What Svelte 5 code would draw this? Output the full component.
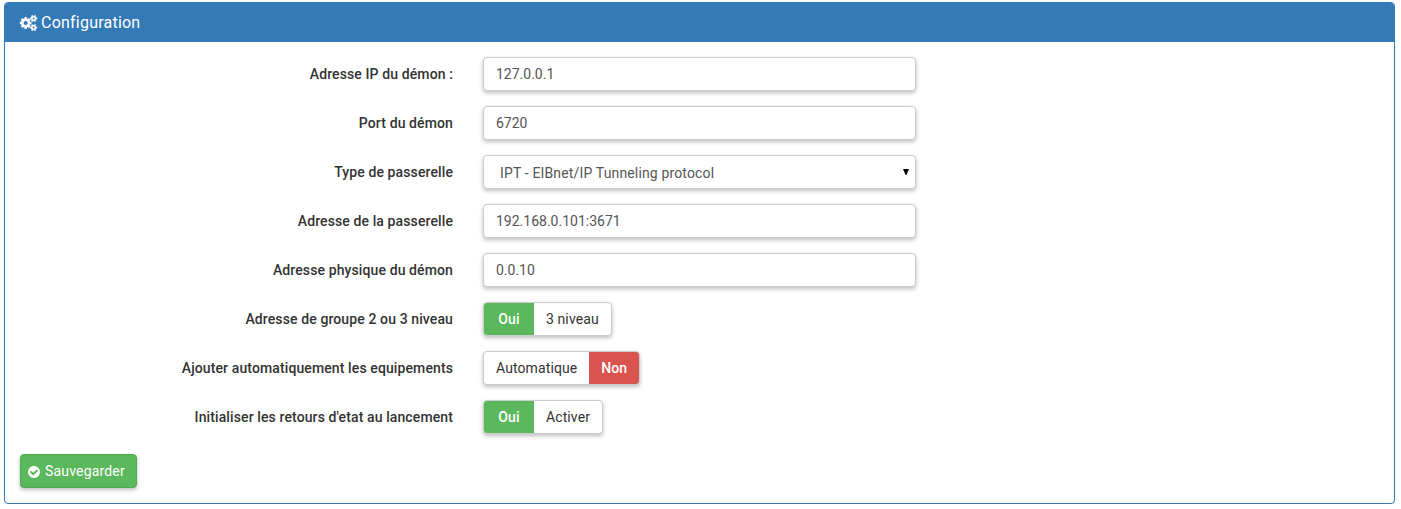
<script>
  const cogs = "M896 896q0-106-75-181t-181-75-181 75-75 181 75 181 181 75 181-75 75-181zm768 512q0-52-38-90t-90-38-90 38-38 90q0 53 37.5 90.5t90.5 37.5 90.5-37.5 37.5-90.5zm0-1024q0-52-38-90t-90-38-90 38-38 90q0 53 37.5 90.5t90.5 37.5 90.5-37.5 37.5-90.5zm-384 421v185q0 10-7 19.5t-16 10.5l-155 24q-11 35-32 76 34 48 90 115 7 11 7 20 0 12-7 19-23 30-82.5 89.5t-78.5 59.5q-11 0-21-7l-115-90q-37 19-77 31-11 108-23 155-7 24-30 24h-186q-11 0-20-7.5t-10-17.5l-23-153q-34-10-75-31l-118 89q-7 7-20 7-11 0-21-8-144-133-144-160 0-9 7-19 10-14 41-53t47-61q-23-44-35-82l-152-24q-10-1-17-9.5t-7-19.5v-185q0-10 7-19.5t16-10.5l155-24q11-35 32-76-34-48-90-115-7-11-7-20 0-12 7-20 22-30 82-89t79-59q11 0 21 7l115 90q34-18 77-32 11-108 23-154 7-24 30-24h186q11 0 20 7.5t10 17.5l23 153q34 10 75 31l118-89q8-7 20-7 11 0 21 8 144 133 144 160 0 8-7 19-12 16-42 54t-45 60q23 48 34 82l152 23q10 2 17 10.5t7 19.5zm640 533v140q0 16-149 31-12 27-30 52 51 113 51 138 0 4-4 7-122 71-124 71-8 0-46-47t-52-68q-20 2-30 2t-30-2q-14 21-52 68t-46 47q-2 0-124-71-4-3-4-7 0-25 51-138-18-25-30-52-149-15-149-31v-140q0-16 149-31 13-29 30-52-51-113-51-138 0-4 4-7 4-2 35-20t59-34 30-16q8 0 46 46.5t52 67.5q20-2 30-2t30 2q51-71 92-112l6-2q4 0 124 70 4 3 4 7 0 25-51 138 17 23 30 52 149 15 149 31zm0-1024v140q0 16-149 31-12 27-30 52 51 113 51 138 0 4-4 7-122 71-124 71-8 0-46-47t-52-68q-20 2-30 2t-30-2q-14 21-52 68t-46 47q-2 0-124-71-4-3-4-7 0-25 51-138-18-25-30-52-149-15-149-31v-140q0-16 149-31 13-29 30-52-51-113-51-138 0-4 4-7 4-2 35-20t59-34 30-16q8 0 46 46.5t52 67.5q20-2 30-2t30 2q51-71 92-112l6-2q4 0 124 70 4 3 4 7 0 25-51 138 17 23 30 52 149 15 149 31z";
  const check = "M1412 734q0-28-18-46l-91-90q-19-19-45-19t-45 19l-408 407-226-226q-19-19-45-19t-45 19l-91 90q-18 18-18 46 0 27 18 45l362 362q19 19 45 19 27 0 46-19l543-543q18-18 18-45zm252 162q0 209-103 385.5t-279.5 279.5-385.5 103-385.5-103-279.5-279.5-103-385.5 103-385.5 279.5-279.5 385.5-103 385.5 103 279.5 279.5 103 385.5z";

  let rows = $state([
    { id: 'ip', label: 'Adresse IP du démon :', type: 'text', value: '127.0.0.1' },
    { id: 'port', label: 'Port du démon', type: 'text', value: '6720' },
    { id: 'kind', label: 'Type de passerelle', type: 'select', value: 'IPT - EIBnet/IP Tunneling protocol' },
    { id: 'gateway', label: 'Adresse de la passerelle', type: 'text', value: '192.168.0.101:3671' },
    { id: 'physical', label: 'Adresse physique du démon', type: 'text', value: '0.0.10' },
    { id: 'group', label: 'Adresse de groupe 2 ou 3 niveau', type: 'switch', value: true, text: '3 niveau' },
    { id: 'auto', label: 'Ajouter automatiquement les equipements', type: 'switch', value: false, text: 'Automatique' },
    { id: 'init', label: "Initialiser les retours d'etat au lancement", type: 'switch', value: true, text: 'Activer' }
  ]);
</script>

<section class="panel">
  <h3 class="heading">
    <svg class="cogs" viewBox="0 0 1920 1792" aria-hidden="true"><path d={cogs} /></svg>
    <span>Configuration</span>
  </h3>
  <form class="body">
    {#each rows as row (row.id)}
      <div class="row">
        <label for={row.id}>{row.label}</label>
        {#if row.type === 'text'}
          <input id={row.id} class="control" type="text" bind:value={row.value} />
        {:else if row.type === 'select'}
          <div class="select">
            <select id={row.id} class="control" bind:value={row.value}>
              <option>{row.value}</option>
            </select>
            <svg class="arrow" viewBox="0 0 6 6" aria-hidden="true"><path d="M0 0h6L3.4 6h-.8z" /></svg>
          </div>
        {:else}
          <button id={row.id} type="button" class="switch" onclick={() => (row.value = !row.value)}>
            {#if row.value}<span class="state on">Oui</span>{/if}
            <span class="text">{row.text}</span>
            {#if !row.value}<span class="state off">Non</span>{/if}
          </button>
        {/if}
      </div>
    {/each}
    <button type="button" class="save">
      <svg class="check" viewBox="128 128 1536 1536" aria-hidden="true"><path d={check} /></svg>
      <span>Sauvegarder</span>
    </button>
  </form>
</section>

<style>
  :global(body) {
    background: #fff;
  }
  .panel {
    box-sizing: border-box;
    width: 1391px;
    height: 502px;
    margin: 2px 0 0 4px;
    border: 1px solid #337ab7;
    border-radius: 4px;
    overflow: hidden;
    font: 14px/20px Roboto, sans-serif;
    color: #333;
  }
  .heading {
    box-sizing: border-box;
    display: flex;
    align-items: center;
    gap: 4px;
    height: 39px;
    margin: 0;
    padding: 0 15px;
    background: #337ab7;
    color: #fff;
    font-size: 16px;
    font-weight: 400;
    letter-spacing: 0.22px;
  }
  svg {
    fill: currentColor;
    flex: none;
  }
  .cogs {
    width: 17px;
    height: 16px;
    overflow: visible;
    stroke: currentColor;
    stroke-width: 50px;
  }
  .body {
    display: flex;
    flex-direction: column;
    gap: 15px;
    padding: 15px;
  }
  .row {
    display: grid;
    grid-template-columns: 433px 433px;
    column-gap: 30px;
    align-items: center;
    height: 34px;
  }
  label {
    font-weight: 500;
    letter-spacing: 0.11px;
    text-align: right;
    white-space: nowrap;
  }
  .control {
    box-sizing: border-box;
    display: block;
    width: 100%;
    height: 34px;
    margin: 0;
    padding: 6px 12px;
    border: 1px solid #ccc;
    border-radius: 4px;
    outline: 0;
    background: #fff;
    box-shadow: 0 2px 4px rgba(0, 0, 0, 0.26);
    color: #555;
    font: 14px/20px Roboto, sans-serif;
  }
  .select {
    position: relative;
  }
  select.control {
    appearance: none;
    padding: 7px 16px 5px;
    letter-spacing: 0.15px;
  }
  .arrow {
    position: absolute;
    top: 14px;
    right: 7px;
    width: 6px;
    height: 6px;
    color: #000;
    pointer-events: none;
  }
  .switch {
    justify-self: start;
    display: flex;
    box-sizing: border-box;
    height: 34px;
    margin: 0;
    padding: 0;
    overflow: hidden;
    border: 1px solid #ccc;
    border-radius: 4px;
    background: #fff;
    box-shadow: 0 2px 4px rgba(0, 0, 0, 0.26);
    color: #333;
    font: 14px/20px Roboto, sans-serif;
  }
  .switch span {
    padding: 6px 12px;
    letter-spacing: 0.1px;
  }
  .switch .state {
    box-sizing: border-box;
    width: 50px;
    padding: 6px 0;
    color: #fff;
    font-weight: 500;
    text-align: center;
  }
  .on {
    background: #5cb85c;
  }
  .off {
    background: #d9534f;
  }
  .save {
    align-self: flex-start;
    box-sizing: border-box;
    display: flex;
    align-items: center;
    gap: 5px;
    width: 117px;
    height: 34px;
    margin-top: 5px;
    padding: 0 7px;
    border: 1px solid #4cae4c;
    border-radius: 4px;
    background: #5cb85c;
    box-shadow: 0 2px 4px rgba(0, 0, 0, 0.26);
    color: #fff;
    font: 14px/20px Roboto, sans-serif;
    letter-spacing: 0.18px;
    white-space: nowrap;
  }
  .check {
    width: 12px;
    height: 12px;
    margin-top: 1px;
  }
</style>
